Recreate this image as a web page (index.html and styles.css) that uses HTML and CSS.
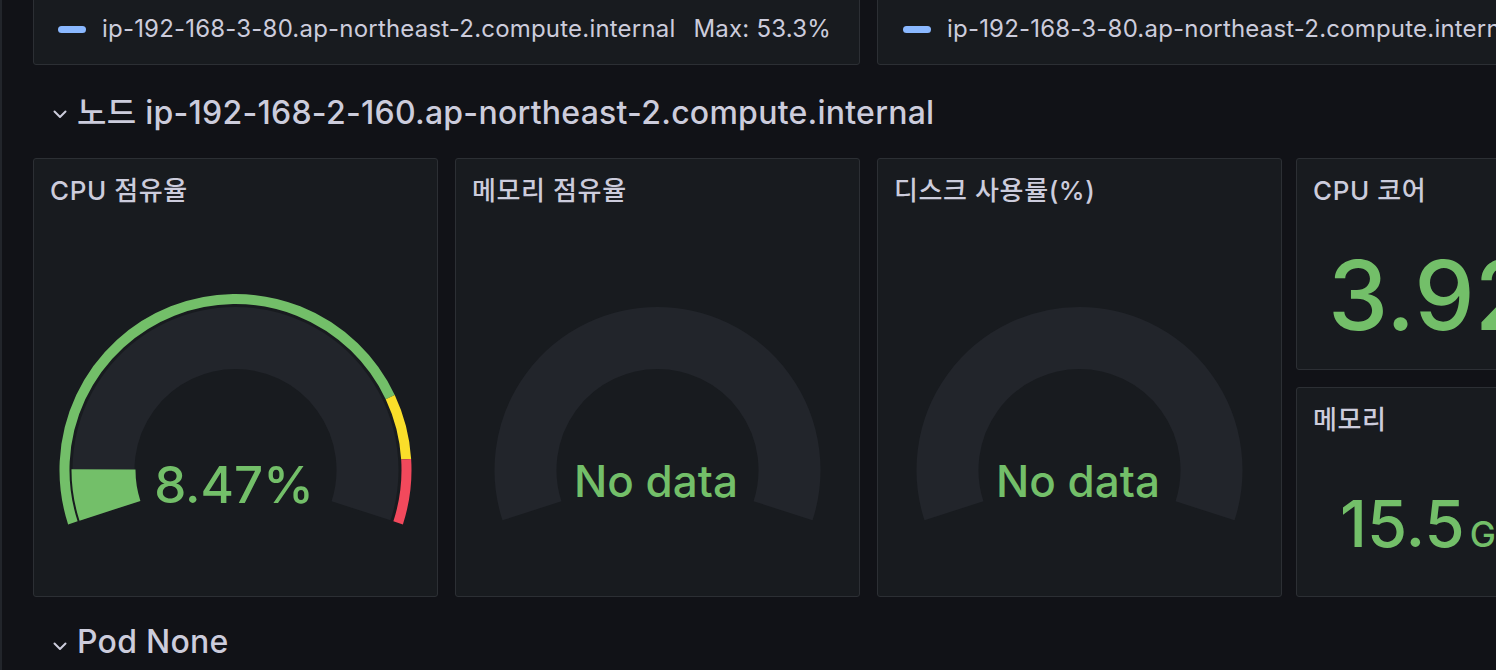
FILE: index.html
```html
<!DOCTYPE html>
<html lang="ko">
<head>
<meta charset="utf-8">
<title>Dashboard</title>
<link rel="stylesheet" href="styles.css">
</head>
<body>
<div class="page">
  <div class="legend-row">
    <div class="panel legend-panel legend-wide">
      <div class="legend-item">
        <span class="swatch"></span>
        <span class="legend-name">ip-192-168-3-80.ap-northeast-2.compute.internal</span>
        <span class="legend-max">Max: 53.3%</span>
      </div>
    </div>
    <div class="panel legend-panel legend-second">
      <div class="legend-item">
        <span class="swatch"></span>
        <span class="legend-name">ip-192-168-3-80.ap-northeast-2.compute.internal</span>
        <span class="legend-max">Max: 53.3%</span>
      </div>
    </div>
  </div>

  <div class="row-header">
    <svg class="chevron" viewBox="0 0 14 9" width="14" height="9"><polyline points="1.5,1.5 7,7 12.5,1.5"/></svg>
    <span class="row-title">노드 ip-192-168-2-160.ap-northeast-2.compute.internal</span>
  </div>

  <div class="panel-grid">
    <div class="panel gauge-panel">
      <div class="panel-header">CPU 점유율</div>
      <div class="gauge-body">
        <svg class="gauge" viewBox="0 0 403 387" width="403" height="387">
          <path class="band" d="M 75.96 302.79 A 132 132 0 1 1 327.04 302.79"/>
          <path class="fill-green" d="M 75.96 302.79 A 132 132 0 0 1 69.5 261.31"/>
          <path class="ring ring-green" d="M 38.87 314.84 A 171 171 0 0 1 356.23 189.19"/>
          <path class="ring ring-yellow" d="M 356.23 189.19 A 171 171 0 0 1 372.16 251.26"/>
          <path class="ring ring-red" d="M 372.16 251.26 A 171 171 0 0 1 364.13 314.84"/>
        </svg>
        <div class="gauge-value">8.47%</div>
      </div>
    </div>

    <div class="panel gauge-panel">
      <div class="panel-header">메모리 점유율</div>
      <div class="gauge-body">
        <svg class="gauge" viewBox="0 0 403 387" width="403" height="387">
          <path class="band" d="M 75.96 302.79 A 132 132 0 1 1 327.04 302.79"/>
        </svg>
        <div class="gauge-value no-data">No data</div>
      </div>
    </div>

    <div class="panel gauge-panel">
      <div class="panel-header">디스크 사용률(%)</div>
      <div class="gauge-body">
        <svg class="gauge" viewBox="0 0 403 387" width="403" height="387">
          <path class="band" d="M 75.96 302.79 A 132 132 0 1 1 327.04 302.79"/>
        </svg>
        <div class="gauge-value no-data">No data</div>
      </div>
    </div>

    <div class="stat-col">
      <div class="panel stat-panel stat-cpu">
        <div class="panel-header">CPU 코어</div>
        <div class="stat-value stat-big">3.92</div>
      </div>
      <div class="panel stat-panel stat-mem">
        <div class="panel-header">메모리</div>
        <div class="stat-value stat-mid">15.5<span class="stat-unit">GiB</span></div>
      </div>
    </div>
  </div>

  <div class="row-header">
    <svg class="chevron" viewBox="0 0 14 9" width="14" height="9"><polyline points="1.5,1.5 7,7 12.5,1.5"/></svg>
    <span class="row-title">Pod None</span>
  </div>
</div>
</body>
</html>
```

FILE: styles.css
```css
* {
  box-sizing: border-box;
}

html, body {
  margin: 0;
  padding: 0;
  height: 100%;
  overflow: hidden;
  background: #111217;
}

body {
  font-family: "Inter", "Noto Sans CJK KR", sans-serif;
  color: #ccccdc;
  border-left: 2px solid #22252b;
}

.page {
  padding-left: 31px;
  width: 1600px;
}

.panel {
  background: #181b1f;
  border: 1px solid #2c2f34;
  border-radius: 3px;
}

/* top legend row (cropped panels) */
.legend-row {
  display: flex;
  gap: 17px;
  margin-top: -12px;
}

.legend-panel {
  height: 77px;
  display: flex;
  align-items: flex-end;
  padding: 0 0 22px 24px;
}

.legend-wide {
  width: 827px;
  flex: none;
}

.legend-second {
  width: 827px;
  flex: none;
  padding-left: 25px;
}

.legend-item {
  display: flex;
  align-items: center;
  height: 28px;
  font-size: 24px;
  letter-spacing: 0.2px;
  white-space: nowrap;
}

.swatch {
  width: 28px;
  height: 7px;
  border-radius: 4px;
  background: #8ab8ff;
  margin-right: 16px;
  margin-top: 3px;
}

.legend-max {
  margin-left: 18px;
}

/* row headers */
.row-header {
  height: 93px;
  display: flex;
  align-items: center;
  padding-left: 20px;
}

.chevron {
  fill: none;
  stroke: #ccccdc;
  stroke-width: 2;
  stroke-linecap: round;
  stroke-linejoin: round;
  margin-right: 10px;
  margin-top: 5px;
}

.row-title {
  font-size: 32px;
  font-weight: 500;
  letter-spacing: 0.25px;
  white-space: nowrap;
  margin-top: -4px;
}

/* panel grid */
.panel-grid {
  display: grid;
  grid-template-columns: 405px 405px 405px 405px;
  column-gap: 17px;
  height: 439px;
}

.panel-header {
  height: 49px;
  padding: 16px 0 0 16px;
  font-size: 26px;
  font-weight: 500;
  line-height: 32px;
  letter-spacing: 0.6px;
  white-space: nowrap;
}

.gauge-panel {
  display: flex;
  flex-direction: column;
}

.gauge-body {
  display: grid;
  flex: 1;
}

.gauge,
.gauge-value {
  grid-area: 1 / 1;
}

.gauge {
  display: block;
}

.band {
  fill: none;
  stroke: #22252b;
  stroke-width: 62;
}

.fill-green {
  fill: none;
  stroke: #73bf69;
  stroke-width: 64;
}

.ring {
  fill: none;
  stroke-width: 10;
}

.ring-green { stroke: #73bf69; }
.ring-yellow { stroke: #fade2a; }
.ring-red { stroke: #f2495c; }

.gauge-value {
  align-self: start;
  justify-self: center;
  margin-top: 252px;
  font-size: 51px;
  line-height: 50px;
  font-weight: 500;
  color: #73bf69;
  margin-left: -3px;
}

.gauge-value.no-data {
  margin-top: 251px;
  font-size: 44px;
  line-height: 44px;
  margin-left: -3px;
}

/* stat column */
.stat-col {
  display: flex;
  flex-direction: column;
  gap: 17px;
  margin-left: -3px;
}

.stat-panel {
  overflow: hidden;
}

.stat-cpu {
  height: 212px;
}

.stat-mem {
  flex: 1;
}

.stat-value {
  color: #73bf69;
  font-weight: 500;
  white-space: nowrap;
}

.stat-big {
  font-size: 96px;
  line-height: 96px;
  padding: 39px 0 0 31px;
}

.stat-mid {
  font-size: 65px;
  line-height: 65px;
  padding: 54px 0 0 43px;
}

.stat-unit {
  font-size: 35px;
  margin-left: 5px;
}
```
